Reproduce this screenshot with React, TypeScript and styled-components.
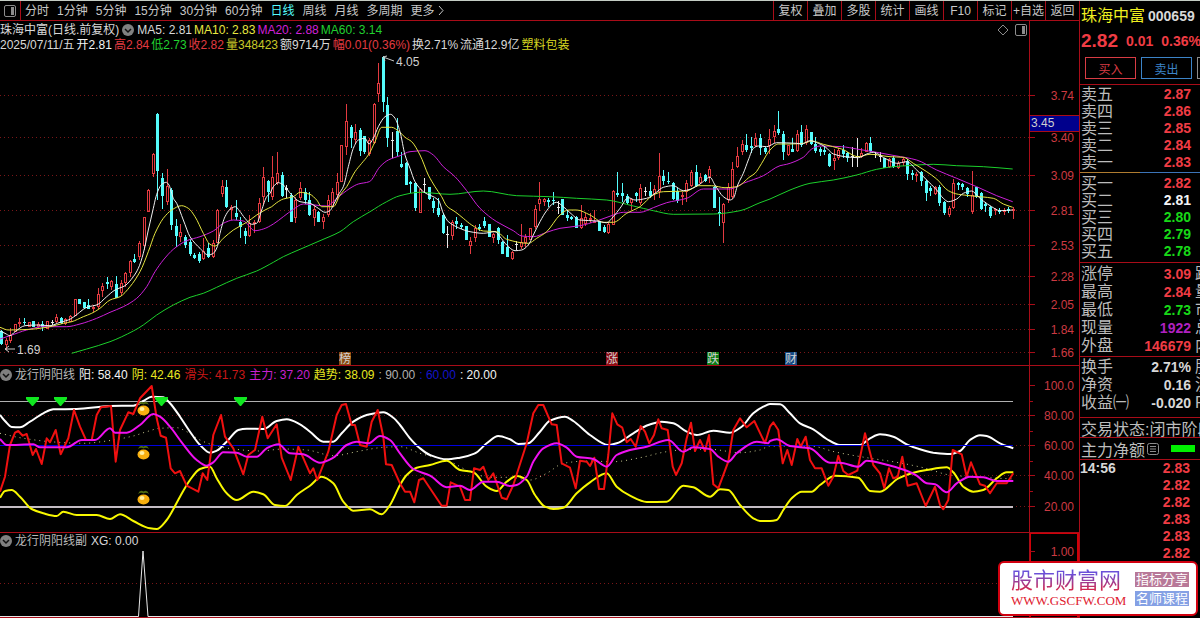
import React from "react";
import styled, { createGlobalStyle } from "styled-components";

const sans = `"Liberation Sans", "Noto Sans CJK SC", sans-serif`;
const RED = "#e23a40";
const LINE = "#a80c18";
const CYAN = "#54fcfc";

const GlobalStyle = createGlobalStyle`
  * { box-sizing: border-box; }
  body { margin: 0; background: #000; color: #c8c8c8; font-family: ${sans}; font-size: 12px; }
  button { font: inherit; color: inherit; background: none; border: 0; padding: 0; cursor: pointer; }
`;

/* ---------- layout ---------- */

const Screen = styled.div`
  display: flex;
  min-height: 100vh;
  border-top: 1px solid #c4ccc4;
  overflow: hidden;
`;

const Workspace = styled.main`
  flex: 1;
  min-width: 0;
  display: flex;
  flex-direction: column;
`;

const Toolbar = styled.header`
  display: flex;
  height: 20px;
  border-bottom: 1px solid ${LINE};
`;

const LayoutButton = styled.button`
  width: 21px;
  display: grid;
  place-items: center;
  border-right: 1px solid ${LINE};
`;

const Tabs = styled.nav`
  flex: 1;
  display: flex;
  align-items: center;
  gap: 8px;
  padding-left: 4px;
  white-space: nowrap;
`;

const Tab = styled.button<{ $active?: boolean }>`
  line-height: 18px;
  color: ${(p) => (p.$active ? CYAN : "#c8c8c8")};
`;

const Tools = styled.div`
  display: flex;
`;

const Tool = styled.button`
  width: 34px;
  line-height: 18px;
  border-left: 1px solid ${LINE};
  white-space: nowrap;
`;

const Panel = styled.section`
  display: flex;
  border-bottom: 1px solid ${LINE};
`;

const PanelBody = styled.div`
  flex: 1;
  min-width: 0;
`;

const InfoRow = styled.div<{ $height: number; $gap: number }>`
  display: flex;
  align-items: center;
  gap: ${(p) => p.$gap}px;
  height: ${(p) => p.$height}px;
  line-height: ${(p) => p.$height}px;
  white-space: nowrap;
`;

const MainInfo = styled.div`
  padding-top: 1px;
`;

const RowTools = styled.div`
  display: flex;
  gap: 6px;
  margin-left: auto;
  padding-right: 2px;
`;

const Value = styled.span<{ $color?: string }>`
  color: ${(p) => p.$color ?? "#d8d8d8"};
`;

const Plot = styled.svg<{ $height: number }>`
  display: block;
  width: 100%;
  height: ${(p) => p.$height}px;
`;

const Axis = styled.div`
  width: 50px;
  border-left: 1px solid ${LINE};
`;

const AxisText = styled.text`
  font-family: ${sans};
  font-size: 12px;
  text-anchor: end;
  fill: #cc3a42;
`;

const ChartText = styled.text`
  font-family: ${sans};
  font-size: 12px;
  fill: #d0d0d0;
`;

/* ---------- sidebar ---------- */

const Sidebar = styled.aside`
  width: 121px;
  border-left: 1px solid ${LINE};
  overflow: hidden;
  white-space: nowrap;
`;

const Quote = styled.div`
  height: 84px;
  padding: 6px 0 0 1px;
  border-bottom: 1px solid ${LINE};
`;

const QuoteLine = styled.div<{ $gap: number }>`
  display: flex;
  align-items: center;
  gap: ${(p) => p.$gap}px;
  height: 18px;
  line-height: 18px;
  margin-bottom: 7px;
`;

const StockName = styled.h1`
  margin: 0;
  font-size: 16px;
  font-weight: 400;
  color: #f0f020;
`;

const Strong = styled.strong<{ $size?: number; $color?: string }>`
  font-size: ${(p) => p.$size ?? 14}px;
  color: ${(p) => p.$color ?? "#d8d8d8"};
`;

const Trades = styled.div`
  display: flex;
  gap: 5px;
  padding-left: 4px;
`;

const TradeButton = styled.button<{ $color: string }>`
  flex: 0 0 51px;
  height: 22px;
  color: ${(p) => p.$color};
  border: 1px solid ${(p) => p.$color};
`;

const DataBlock = styled.div<{ $rule?: string; $top?: number; $bottom?: number }>`
  padding: ${(p) => p.$top ?? 1}px 0 ${(p) => p.$bottom ?? 1}px 1px;
  border-bottom: 1px solid ${LINE};
  border-image: ${(p) => p.$rule ?? "none"};
`;

const DataTable = styled.table<{ $row: number }>`
  width: 119px;
  table-layout: fixed;
  border-collapse: collapse;
  th, td { padding: 0; height: ${(p) => p.$row}px; line-height: ${(p) => p.$row}px; }
`;

const Label = styled.th`
  width: 50px;
  font-size: 16px;
  font-weight: 400;
  text-align: left;
  color: #bcbcbc;
`;

const Price = styled.td<{ $color: string }>`
  width: 60px;
  font-size: 14px;
  font-weight: 700;
  text-align: right;
  color: ${(p) => p.$color};
`;

const NextLabel = styled.td`
  padding-left: 4px !important;
  font-size: 16px;
  color: #bcbcbc;
`;

const Time = styled(Label)`
  font-size: 14px;
  font-weight: 700;
  color: #d8d8d8;
`;

const StatusRow = styled.div<{ $height: number }>`
  display: flex;
  align-items: center;
  height: ${(p) => p.$height}px;
  padding-left: 1px;
  font-size: 16px;
  color: #bcbcbc;
  border-bottom: 1px solid ${LINE};
`;

const FlowBar = styled.span`
  width: 24px;
  height: 7px;
  margin-left: 12px;
  background: #00f000;
`;

const ListIcon = styled.svg`
  margin-left: 2px;
`;

/* ---------- site badge ---------- */

const SiteBadge = styled.a`
  position: fixed;
  right: 2px;
  bottom: 2px;
  width: 200px;
  height: 55px;
  display: flex;
  justify-content: space-between;
  align-items: center;
  padding: 0 7px 0 11px;
  background: #fff;
  border: 2px solid #d2000f;
  border-radius: 6px;
  text-decoration: none;
  white-space: nowrap;
`;

const SiteName = styled.div`
  font-size: 22px;
  line-height: 24px;
  color: transparent;
  background: linear-gradient(#6a50d8 20%, #d02850 85%);
  background-clip: text;
`;

const SiteUrl = styled.div`
  font-family: "Liberation Serif", serif;
  font-size: 13px;
  line-height: 16px;
  color: #e02030;
`;

const SiteTags = styled.div`
  display: grid;
  gap: 4px;
`;

const SiteTag = styled.span<{ $bg: string }>`
  width: 54px;
  font-size: 13px;
  line-height: 15px;
  text-align: center;
  color: #fff;
  background: ${(p) => p.$bg};
`;

/* ---------- chart data ---------- */

/* One entry per day: kind, then wick top, body top, body bottom, wick bottom. */
const CANDLES = `
C 330 331 344 345;R 338 340 345 350;R 328 335 341 343;R 324 324 332 332;R 318 322 324 327;C 318 322 323 325;R 322 322 327 327;C 321 321 327 327;R 322 324 327 328;C 321 324 327 331;
R 321 321 329 329;W 320 322 323 325;R 314 317 322 323;C 317 318 323 324;R 318 319 324 325;R 315 316 322 322;R 299 299 316 316;C 299 299 304 304;C 302 302 308 308;C 299 305 309 309;
R 305 307 309 312;R 288 294 307 309;R 283 286 291 297;C 277 282 284 289;R 280 281 287 290;C 276 284 298 298;R 280 283 293 296;R 272 273 283 287;R 260 261 273 277;C 254 259 262 263;
R 241 243 257 260;R 217 217 246 250;R 189 190 212 212;R 153 154 174 177;C 113 114 171 200;C 173 178 196 209;R 169 186 202 205;C 188 190 225 230;C 219 226 236 247;R 224 232 237 242;
C 235 237 245 248;C 239 242 254 256;C 253 255 258 259;C 252 254 261 263;R 238 251 259 260;C 243 248 257 258;R 240 243 257 258;R 209 210 243 243;R 180 186 194 197;C 180 187 207 208;
R 205 207 210 220;C 200 213 217 220;C 217 222 227 238;C 228 231 236 244;R 215 223 236 237;R 220 222 224 233;R 198 203 222 223;R 167 177 197 205;C 180 181 192 202;R 156 177 197 200;
R 152 173 183 185;C 172 175 196 197;W 185 188 190 198;C 193 195 222 222;R 197 200 218 223;R 182 188 198 200;C 188 192 200 204;C 192 200 215 216;R 205 209 218 226;C 211 212 222 222;
R 214 217 222 229;R 195 200 215 217;R 188 192 207 207;R 173 182 195 200;R 145 145 182 182;R 104 121 147 155;C 125 127 138 148;R 124 132 140 144;C 128 130 151 156;C 136 136 152 154;
R 138 140 154 156;R 103 104 143 144;R 63 83 94 102;C 56 57 102 112;C 97 105 138 147;W 132 140 141 158;C 118 131 152 156;C 152 164 167 168;C 162 163 185 185;C 181 182 184 193;
C 183 183 208 211;R 188 189 213 213;W 178 184 185 193;C 187 187 199 200;C 198 201 208 213;C 198 208 215 217;C 213 215 233 234;W 226 234 235 248;R 220 222 236 240;C 217 221 224 229;
C 223 225 227 229;C 226 226 240 240;R 237 241 246 254;R 225 228 238 242;C 224 227 229 231;C 217 221 226 228;C 224 224 237 237;R 233 234 238 243;C 227 228 240 244;C 241 242 254 254;
C 235 247 257 257;R 251 252 259 260;W 241 244 245 250;R 224 242 247 249;R 234 237 243 247;R 228 228 240 240;R 205 209 227 229;R 182 199 204 211;R 198 199 202 206;C 198 200 202 207;
C 192 200 201 205;W 201 207 208 214;C 199 199 215 215;C 210 215 218 221;C 216 217 219 220;C 216 217 228 228;R 205 218 228 229;R 213 217 224 226;R 213 218 220 223;R 210 221 222 223;
C 221 221 231 231;C 225 227 232 233;R 222 224 233 234;R 190 191 225 225;C 172 193 195 197;C 183 193 196 202;C 194 196 203 205;R 198 199 203 210;C 192 193 196 202;R 184 188 203 205;
W 187 191 192 196;C 182 191 196 198;R 185 189 194 200;R 153 176 192 198;C 170 176 181 185;C 172 181 182 184;C 182 183 199 200;C 188 191 201 203;R 192 195 197 205;R 180 183 192 202;
R 170 172 186 187;C 165 172 186 187;R 173 177 183 184;C 174 175 181 182;R 166 169 177 183;C 186 187 208 208;C 197 212 214 226;R 203 204 223 243;R 183 187 200 203;R 162 169 197 199;
R 147 156 167 168;R 140 144 152 155;C 134 145 150 152;C 137 146 148 153;R 133 138 146 147;C 134 138 148 155;C 147 148 152 154;R 129 139 146 154;R 125 131 137 143;C 111 129 133 135;
C 131 134 152 160;R 145 145 155 156;C 138 149 152 152;R 130 134 151 152;C 125 132 145 147;R 125 129 143 145;C 132 132 144 145;C 137 144 151 153;C 147 149 152 156;C 146 150 152 155;
C 153 154 166 167;R 149 158 161 170;R 148 150 158 160;C 145 150 154 158;C 152 153 158 162;W 147 156 157 167;W 138 156 157 167;R 148 153 157 158;R 142 143 152 152;C 137 143 151 152;
W 152 154 155 158;W 152 156 157 162;C 158 158 168 168;R 158 159 167 168;C 156 158 167 168;R 161 163 168 169;R 157 159 163 166;C 159 161 174 180;C 170 173 175 180;R 172 174 176 182;
C 171 172 181 186;C 180 181 193 201;C 186 188 191 196;R 186 187 194 195;C 185 187 203 206;C 201 202 213 215;R 206 208 215 217;R 179 183 208 209;C 182 183 185 190;C 183 184 187 190;
C 187 188 194 197;R 171 195 212 214;C 187 187 197 198;C 192 193 209 210;C 202 204 206 212;C 206 207 216 218;R 208 209 211 215;C 208 210 212 214;R 208 210 212 215;C 207 209 211 213;
R 207 209 211 219`
  .split(";")
  .map((row, i) => {
    const [kind, ...levels] = row.trim().split(" ");
    const [high, top, bottom, low] = levels.map(Number);
    return { kind, high, top, bottom, low, x: Math.round(1 + i * 4.6) };
  });

/* A curve is a run of segments; points are thirds of a chart unit from the segment origin. */
type Segment = [originX: number, originY: number, points: string];

const toPoints = (segments: Segment[]) =>
  segments.flatMap(([ox, oy, points]) =>
    points.split(" ").map((pair) => {
      const [x, y] = pair.split(",").map(Number);
      return [ox + x / 3, oy + y / 3];
    })
  );

const straightPath = (segments: Segment[]) =>
  "M" + toPoints(segments).map(([x, y]) => `${x.toFixed(1)} ${y.toFixed(1)}`).join("L");

/* Cubic spline through the points, with slopes limited so that it does not overshoot. */
const smoothPath = (segments: Segment[]) => {
  const p = toPoints(segments);
  const slope = (i: number) => (p[i + 1][1] - p[i][1]) / (p[i + 1][0] - p[i][0]);
  const tangent = p.map((_, i) => {
    if (i === 0) return slope(0);
    if (i === p.length - 1) return slope(i - 1);
    const a = slope(i - 1);
    const b = slope(i);
    return a * b <= 0 ? 0 : (2 * a * b) / (a + b);
  });
  let d = `M${p[0][0].toFixed(1)} ${p[0][1].toFixed(1)}`;
  for (let i = 1; i < p.length; i++) {
    const [x0, y0] = p[i - 1];
    const [x1, y1] = p[i];
    const h = (x1 - x0) / 3;
    d += `C${[x0 + h, y0 + h * tangent[i - 1], x1 - h, y1 - h * tangent[i], x1, y1].map((n) => n.toFixed(1)).join(" ")}`;
  }
  return d;
};

const MA5: Segment[] = [
  [0, 190, "0,423 15,430 30,437 45,425 75,407 110,405 150,407 180,397 205,390 225,378 250,358 265,350 290,345 320,320 345,300 375,287 400,260 415,235 430,190 445,120 460,55 468,20"],
  [0, 0, "475,570 485,553 499,547 507,555 515,580"],
  [0, 190, "520,25 530,40 550,90 570,140 600,175 625,195 640,190 652,170 660,130 675,80 690,58 706,50 718,62 735,85 755,103 770,100 785,60 800,20"],
  [0, 0, "810,580 820,560 835,548 850,555 875,585 900,605 930,610"],
  [0, 190, "955,55 975,67 990,62 1000,45 1018,10"],
  [0, 0, "1030,560 1045,500 1060,445 1075,420 1095,415 1107,432 1120,415 1135,380 1155,350 1172,343 1185,355"],
  [400, 0, "0,395 15,465 30,505 45,545 70,575"],
  [400, 160, "115,120 130,160 145,185 175,203 210,215 250,220 285,215 300,230 320,255 345,272 365,270 385,255 400,225 420,185 440,152 460,130 470,127 490,140 510,158 540,180 590,183 620,188 640,170 660,145 685,113 705,120 740,115 765,100 790,82 820,77 850,92 870,88 900,72 930,52 945,75 970,110 990,120 1000,115 1013,75"],
  [400, 0, "1030,520 1045,480 1060,445 1075,438 1100,440 1130,428"],
  [770, 0, "80,430 95,432 120,422 145,430 165,440 190,462 225,470 265,473 290,462 310,457 345,475 380,490 410,485 440,510 470,540 500,570 520,595 535,605 560,597 580,580 605,573"],
  [770, 180, "625,50 640,63 665,80 690,92 728,90"],
];

const MA10: Segment[] = [
  [0, 190, "0,412 25,420 90,418 150,410 190,400 215,395 250,380 275,370 300,355 330,330 360,320 390,290 420,245 445,185 465,130 490,85 515,60 545,47 565,55 585,80 610,130 630,163 645,168 670,145 700,120 740,97 770,75 795,60 815,50 830,38"],
  [0, 0, "850,597 880,590 900,577 930,583 950,600"],
  [0, 190, "965,50 1000,50 1020,15"],
  [0, 0, "1040,560 1065,515 1085,490 1105,465 1125,425 1145,382 1175,382"],
  [400, 0, "0,397 15,412 35,425 60,465 85,525 105,560"],
  [400, 160, "125,110 140,138 165,155 190,175 215,195 250,213 290,215 320,238 385,250 410,235 440,215 480,165 505,150 530,150 570,165 610,187 640,187 680,160 720,140 760,105 790,95 860,93 895,77 935,77 975,83 1010,80 1050,50"],
  [400, 0, "1065,520 1085,490 1110,450 1135,432"],
  [770, 0, "60,432 100,430 125,423 160,433 215,447 265,470 300,463 360,470 400,472 430,490 470,515 500,537 535,572"],
  [770, 180, "565,43 600,47 670,55 700,72 728,82"],
];

const MA20: Segment[] = [
  [0, 190, "0,447 30,437 80,420 130,410 200,410 240,402 290,385 330,367 370,350 410,325 440,290 465,245 490,210 520,178 560,152 600,140 640,123 670,100 700,90 730,93 765,122 790,117 820,102 850,80 880,58 910,42 980,48 1010,25"],
  [0, 0, "1050,565 1075,552 1108,545 1140,500 1165,480"],
  [400, 0, "0,467 30,455 75,452 100,465 130,500 165,530"],
  [400, 160, "200,92 240,145 290,185 340,212 365,228 400,230 440,217 480,205 540,197 590,183 640,165 670,157 720,157 760,143 800,128 860,115 910,87 990,87"],
  [400, 0, "1030,550 1090,527 1140,497"],
  [770, 0, "50,493 100,472 125,447 150,438 215,440 260,447 320,457 375,467 440,480 500,510 560,535 620,560 680,587 728,605"],
];

const MA60: Segment[] = [
  [0, 190, "215,490 260,477 330,455 400,423 430,405 470,375 520,345 570,322 610,310 650,292 710,265 770,243 820,217 850,200 900,178 960,152 1020,125 1060,95 1110,65 1160,35"],
  [400, 0, "0,587 60,577 150,583 250,573 350,587 450,590 530,595"],
  [400, 160, "620,120 700,138 760,152 820,163 940,162 1020,152 1080,128"],
  [770, 0, "0,597 60,570 120,550 190,540 260,525 320,508 370,500 410,497 490,493 560,497 640,500 728,507"],
];

const YANG: Segment[] = [
  [0, 365, "0,150 15,168 35,186 60,187 90,170 130,145 160,133 230,132 330,123 400,122 430,108 455,95 490,97 510,115 540,155 570,200 600,240 630,263 650,257 680,230 715,195 740,191 790,192 830,168 860,163 900,178 930,200 970,230 1000,230 1025,205 1060,170 1100,150 1150,142 1180,158"],
  [400, 365, "0,180 30,220 60,250 90,270 140,283 180,278 225,265 260,235 295,213 330,223 355,237 385,235 420,200 450,167 495,155 520,168 570,210 625,240 650,235 700,205 745,180 785,170 820,175 860,200 890,210 940,197 990,203 1025,185 1060,145 1090,125"],
  [770, 365, "0,117 30,118 60,145 90,175 130,193 170,222 210,240 270,240 300,220 330,208 370,215 410,238 450,253 490,263 540,267 570,258 600,225 630,211 650,213 690,235 730,250"],
];

const YIN: Segment[] = [
  [0, 365, "0,398 15,378 35,375 60,395 95,432 130,445 170,453 190,440 230,450 290,450 330,462 360,448 400,468 450,490 470,492 500,465 540,395 570,345 600,312 630,305 650,340 680,385 710,405 760,380 790,388 825,420 855,423 890,390 930,362 965,335 1000,355 1030,410 1060,437 1110,433 1145,448 1170,420"],
  [400, 365, "0,360 20,330 50,308 90,300 140,287 180,315 220,322 260,365 290,378 320,350 350,333 380,345 405,390 435,425 460,432 490,428 530,385 570,352 620,325 650,365 690,392 740,411 800,410 850,362 880,367 930,395 960,373 985,375 1020,420 1060,460 1080,468"],
  [770, 365, "0,468 20,465 40,435 65,400 95,380 125,380 150,360 195,332 265,338 300,378 330,380 385,340 430,323 470,315 530,307 550,322 580,365 610,380 640,375 680,340 710,322 730,322"],
];

const FORCE: Segment[] = [
  [0, 365, "0,222 20,240 100,238 120,247 200,247 245,225 285,225 330,190 345,203 380,203 420,180 460,147 480,155 510,185 545,232 590,285 620,302 640,292 670,262 710,263 740,275 770,275 800,250 835,238 870,265 910,268 960,293 1000,278 1040,240 1070,230 1105,235 1140,213 1170,225"],
  [400, 365, "0,265 40,312 90,332 140,367 180,362 210,375 250,350 290,350 330,363 350,360 380,335 400,290 430,250 470,235 500,248 530,275 580,282 620,305 650,270 690,255 740,245 805,225 850,260 880,247 930,252 955,275 985,290 1010,265 1070,230 1105,235"],
  [770, 365, "0,228 20,223 60,243 120,250 180,293 210,293 265,305 290,287 345,298 410,317 440,332 470,355 495,358 530,382 560,355 600,335 640,337 680,348 730,348"],
];

const SLIP: Segment[] = [
  [0, 365, "0,380 15,335 30,240 45,203 55,198 68,212 80,207 98,270 108,252 125,297 140,220 150,232 167,195 182,268 205,220 222,135 240,185 258,225 275,225 290,150 303,127 333,123 347,290 360,195 385,142 400,147 420,100 455,63 470,160 482,212 498,218 512,310 525,325 540,318 560,362 595,380 608,325 622,345 640,210 663,150 675,215 700,250 730,328 745,270 765,255 787,155 803,220 830,178 845,278 872,345 895,245 930,325 940,310 952,345 985,260 1010,150 1025,120 1038,117 1055,180 1065,180 1080,240 1100,245 1115,170 1133,135 1150,215 1158,298 1175,300"],
  [400, 365, "0,355 15,380 30,380 43,412 57,345 70,340 90,370 125,422 140,422 152,352 180,365 195,405 210,405 222,310 240,315 250,305 265,345 280,325 305,398 320,403 340,360 380,235 400,145 415,120 430,120 455,178 470,180 485,295 510,308 527,370 540,287 560,290 570,303 583,278 597,372 612,372 625,270 637,145 652,178 667,188 680,232 692,222 707,245 722,183 735,200 748,235 762,210 775,163 785,190 803,195 818,305 828,330 845,295 860,220 873,173 885,258 900,225 915,258 927,210 940,358 955,370 985,290 1000,195 1020,160 1040,187 1063,168 1095,235"],
  [770, 365, "0,185 10,172 25,195 38,295 52,255 65,300 82,222 92,245 107,215 120,285 135,310 155,310 175,362 190,335 205,272 220,318 235,330 262,317 285,205 310,300 330,325 343,370 357,310 370,340 383,335 397,275 413,362 440,355 467,423 495,365 510,420 520,433 535,405 548,255 575,268 590,335 603,292 630,358 645,362 660,385 680,355 710,355 730,325"],
];

const TREND: Segment[] = [
  [0, 365, "0,205 60,218 150,230 250,235 320,228 400,213 440,200 480,190 530,188 560,200 600,225 640,240 700,252 780,258 850,252 920,255 1000,272 1080,258 1150,247"],
  [400, 365, "0,245 60,265 150,290 210,320 270,337 330,337 390,345 440,325 490,295 560,288 640,290 720,278 800,260 870,253 930,253 1020,263 1080,255"],
  [770, 365, "0,243 120,243 200,262 290,278 380,292 460,308 540,330 600,335 730,342"],
];

const PRICE_TICKS: [number, string][] = [
  [95, "3.74"], [137, "3.40"], [175, "3.09"], [210, "2.81"], [245, "2.53"],
  [276, "2.28"], [304, "2.05"], [329, "1.84"], [352, "1.66"],
];

const LEVEL_TICKS: [number, string][] = [
  [385, "100.0"], [415, "80.00"], [445, "60.00"], [475, "40.00"], [506, "20.00"],
];

const EVENTS = [
  { x: 345, text: "榜", fill: "#8a4a10" },
  { x: 612, text: "涨", fill: "#8c0c14" },
  { x: 713, text: "跌", fill: "#0c7c14" },
  { x: 791, text: "财", fill: "#144a84" },
];

/* ---------- pieces ---------- */

type CurveProps = { data: Segment[]; color: string; width?: number; dash?: string; straight?: boolean };

const Curve = ({ data, color, width = 1, dash, straight }: CurveProps) => (
  <path
    d={straight ? straightPath(data) : smoothPath(data)}
    fill="none"
    stroke={color}
    strokeWidth={width}
    strokeDasharray={dash}
    strokeLinejoin="round"
  />
);

const GridLine = ({ y }: { y: number }) => (
  <path d={`M0 ${y}.5H1029`} stroke="#7a1618" strokeDasharray="1 3" shapeRendering="crispEdges" />
);

const Candle = ({ kind, x, high, top, bottom, low }: (typeof CANDLES)[number]) => {
  if (kind === "R") {
    return (
      <g stroke={RED} fill="none">
        <path d={`M${x}.5 ${high}V${top}M${x}.5 ${bottom}V${low}`} />
        <rect x={x - 0.5} y={top + 0.5} width={2} height={Math.max(1, bottom - top - 1)} />
      </g>
    );
  }
  const color = kind === "C" ? CYAN : "#e8e8e8";
  return (
    <g fill={color}>
      <rect x={x} y={high} width={1} height={low - high} />
      <rect x={x - 1} y={top} width={3} height={bottom - top} />
    </g>
  );
};

const FoldIcon = () => (
  <svg width="12" height="12" viewBox="0 0 12 12" aria-hidden="true">
    <circle cx="6" cy="6" r="6" fill="#808080" />
    <path d="M3 5l3 3 3-3" fill="none" stroke="#101010" strokeWidth="1.5" />
  </svg>
);

const SplitIcon = () => (
  <svg width="12" height="12" viewBox="0 0 12 12" aria-hidden="true">
    <rect x=".5" y=".5" width="11" height="11" rx="1.5" fill="none" stroke="#8c8c8c" />
    <rect x="7" y="2" width="3" height="8" fill="#8c8c8c" />
  </svg>
);

const Fruit = ({ y }: { y: number }) => (
  <g>
    <path d={`M138 ${y - 5}q2-5 5.5-2.5q3.5-2.5 5.5 2.5q-3-2-5.5-.5q-2.5-1.500-5.500 .5z`} fill="#4c6a10" />
    <ellipse cx="143.500" cy={y + 0.5} rx="6" ry="5" fill="#f8b010" />
    <ellipse cx="142" cy={y - 1} rx="2.500" ry="2" fill="#fff0a0" />
  </g>
);

const TABS = ["分时", "1分钟", "5分钟", "15分钟", "30分钟", "60分钟", "日线", "周线", "月线", "多周期"];
const TOOLS = ["复权", "叠加", "多股", "统计", "画线", "F10", "标记", "+自选", "返回"];

const UP = "#f03c44";
const DOWN = "#18d818";

type Row = [label: string, value: string, color: string, next?: string];

const ASKS: Row[] = [
  ["卖五", "2.87", UP], ["卖四", "2.86", UP], ["卖三", "2.85", UP], ["卖二", "2.84", UP], ["卖一", "2.83", UP],
];
const BIDS: Row[] = [
  ["买一", "2.82", UP], ["买二", "2.81", "#f4f4f4"], ["买三", "2.80", DOWN], ["买四", "2.79", DOWN], ["买五", "2.78", DOWN],
];
const STATS: Row[] = [
  ["涨停", "3.09", UP, "跌"], ["最高", "2.84", UP, "量"], ["最低", "2.73", DOWN, "市"],
  ["现量", "1922", "#b020c0", "总"], ["外盘", "146679", UP, "内"],
];
const BASICS: Row[] = [
  ["换手", "2.71%", "#d8d8d8", "股"], ["净资", "0.16", "#d8d8d8", "流"], ["收益㈠", "-0.020", "#d8d8d8", "P"],
];
const DEALS = ["2.83", "2.82", "2.82", "2.83", "2.83", "2.82"];

const Rows = ({ rows, height }: { rows: Row[]; height: number }) => (
  <DataTable $row={height}>
    <tbody>
      {rows.map(([label, value, color, next]) => (
        <tr key={label}>
          <Label scope="row">{label}</Label>
          <Price $color={color}>{value}</Price>
          <NextLabel>{next}</NextLabel>
        </tr>
      ))}
    </tbody>
  </DataTable>
);

const PricePanel = () => (
  <Panel>
    <PanelBody>
      <MainInfo>
        <InfoRow $height={16} $gap={2}>
          <InfoRow as="span" $height={16} $gap={3}>
            <Value>珠海中富(日线.前复权)</Value>
            <FoldIcon />
            <Value>MA5: 2.81</Value>
          </InfoRow>
          <Value $color="#e8e840">MA10: 2.83</Value>
          <Value $color="#d020d8">MA20: 2.88</Value>
          <Value $color="#20d030">MA60: 3.14</Value>
          <RowTools>
            <svg width="12" height="12" viewBox="0 0 12 12" aria-hidden="true">
              <path d="M6 1l5 5-5 5-5-5z" fill="none" stroke="#8c8c8c" />
            </svg>
            <SplitIcon />
          </RowTools>
        </InfoRow>
        <InfoRow $height={14} $gap={2}>
          <Value>2025/07/11/五</Value>
          <Value $color="#f4f4f4">开2.81</Value>
          <Value $color={RED}>高2.84</Value>
          <Value $color="#20d030">低2.73</Value>
          <Value $color={RED}>收2.82</Value>
          <Value $color="#c8c828">量348423</Value>
          <Value>额9714万</Value>
          <Value $color={RED}>幅0.01(0.36%)</Value>
          <Value>换2.71%</Value>
          <Value>流通12.9亿</Value>
          <Value $color="#d8d820">塑料包装</Value>
        </InfoRow>
      </MainInfo>
      <Plot $height={313} viewBox="0 52 1029 313" preserveAspectRatio="none">
        {PRICE_TICKS.map(([y]) => <GridLine key={y} y={y} />)}
        <g shapeRendering="crispEdges">
          {CANDLES.map((c) => <Candle key={c.x} {...c} />)}
        </g>
        <Curve data={MA60} color="#1cd02c" />
        <Curve data={MA20} color="#cc20d8" />
        <Curve data={MA10} color="#e4e440" />
        <Curve data={MA5} color="#f0f0f0" />
        <path d="M383 57l11 4M383 57l4-1M383 57l2 4M5 349h10M5 349l4-3M5 349l4 3" stroke="#c8c8c8" fill="none" />
        <ChartText x="396" y="66">4.05</ChartText>
        <ChartText x="17" y="354">1.69</ChartText>
        {EVENTS.map((e) => (
          <g key={e.text}>
            <rect x={e.x - 6} y="352" width="12" height="13" fill={e.fill} />
            <ChartText x={e.x - 6} y="363">{e.text}</ChartText>
          </g>
        ))}
      </Plot>
    </PanelBody>
    <Axis>
      <Plot $height={344} viewBox="1030 21 49 344">
        {PRICE_TICKS.map(([y, text]) => (
          <g key={y}>
            <path d={`M1030 ${y}.5h5`} stroke={LINE} />
            <AxisText x="1074" y={y + 5}>{text}</AxisText>
          </g>
        ))}
        <rect x="1030" y="115" width="49" height="16" fill="#00008c" />
        <path d="M1030 115.500h49M1030 131.500h49" stroke={LINE} />
        <ChartText x="1031" y="127">3.45</ChartText>
      </Plot>
    </Axis>
  </Panel>
);

const TrendPanel = () => (
  <Panel>
    <PanelBody>
      <InfoRow $height={18} $gap={4}>
        <InfoRow as="span" $height={18} $gap={3}>
          <FoldIcon />
          <Value $color="#b8b8b8">龙行阴阳线</Value>
        </InfoRow>
        <Value $color="#f4f4f4">阳: 58.40</Value>
        <Value $color="#e8e820">阴: 42.46</Value>
        <Value $color="#c81818">滑头: 41.73</Value>
        <Value $color="#c820d0">主力: 37.20</Value>
        <Value $color="#e8e820">趋势: 38.09</Value>
        <Value $color="#b0b0b0">: 90.00</Value>
        <Value $color="#1414c8">: 60.00</Value>
        <Value $color="#f4f4f4">: 20.00</Value>
      </InfoRow>
      <Plot $height={148} viewBox="0 384 1029 148" preserveAspectRatio="none">
        {LEVEL_TICKS.slice(1).map(([y]) => <GridLine key={y} y={y} />)}
        <path d="M0 401.500H1013" stroke="#b0b0b0" />
        <path d="M0 507H1013" stroke="#c4bcc4" strokeWidth="2" />
        <Curve data={TREND} color="#c8c890" dash="1 4" />
        <Curve data={YANG} color="#ffffff" width={2} />
        <Curve data={YIN} color="#f8f800" width={2} />
        <path d="M0 445.500H1013" stroke="#0000e0" />
        <Curve data={SLIP} color="#f01010" width={2} straight />
        <Curve data={FORCE} color="#f010f0" width={2} />
        {[410, 454, 499].map((y) => <Fruit key={y} y={y} />)}
        {[32, 60, 161, 240].map((x) => (
          <path key={x} d={`M${x - 6} 397h13v2l-6 7h-1l-6-7z`} fill="#10e820" />
        ))}
      </Plot>
    </PanelBody>
    <Axis>
      <Plot $height={166} viewBox="1030 366 49 166">
        <path d="M1030 401.500h3M1030 431.500h3M1030 461.500h3M1030 491.500h3" stroke={LINE} />
        {LEVEL_TICKS.map(([y, text]) => (
          <g key={y}>
            <path d={`M1030 ${y}.5h5`} stroke={LINE} />
            <AxisText x="1074" y={y + 5}>{text}</AxisText>
          </g>
        ))}
      </Plot>
    </Axis>
  </Panel>
);

const SignalPanel = () => (
  <Panel>
    <PanelBody>
      <InfoRow $height={16} $gap={4}>
        <InfoRow as="span" $height={16} $gap={3}>
          <FoldIcon />
          <Value $color="#b8b8b8">龙行阴阳线副</Value>
        </InfoRow>
        <Value>XG: 0.00</Value>
      </InfoRow>
      <Plot $height={68} viewBox="0 549 1029 68" preserveAspectRatio="none">
        <GridLine y={583} />
        <path d="M0 616.500H138.500L143 551L148 616.500H1013" fill="none" stroke="#e8e8e8" />
      </Plot>
    </PanelBody>
    <Axis>
      <Plot $height={84} viewBox="1030 533 49 84">
        <rect x="1030" y="533" width="48" height="90" fill="none" stroke="#d00008" strokeWidth="2" />
        <path d="M1030 551.500h5" stroke={LINE} />
        <AxisText x="1074" y="556">1.00</AxisText>
      </Plot>
    </Axis>
  </Panel>
);

export default function App() {
  return (
    <>
      <GlobalStyle />
      <Screen>
        <Workspace>
          <Toolbar>
            <LayoutButton aria-label="布局"><SplitIcon /></LayoutButton>
            <Tabs>
              {TABS.map((t) => <Tab key={t} $active={t === "日线"}>{t}</Tab>)}
              <Tab>
                更多{" "}
                <svg width="6" height="9" viewBox="0 0 6 9" aria-hidden="true">
                  <path d="M1 0l4 4.500-4 4.500" fill="none" stroke="#c8c8c8" />
                </svg>
              </Tab>
            </Tabs>
            <Tools>
              {TOOLS.map((t) => <Tool key={t}>{t}</Tool>)}
            </Tools>
          </Toolbar>
          <PricePanel />
          <TrendPanel />
          <SignalPanel />
        </Workspace>

        <Sidebar>
          <Quote>
            <QuoteLine $gap={3}>
              <StockName>珠海中富</StockName>
              <Strong>000659</Strong>
            </QuoteLine>
            <QuoteLine $gap={8}>
              <Strong $size={19} $color={UP}>2.82</Strong>
              <Strong $color={UP}>0.01</Strong>
              <Strong $color={UP}>0.36%</Strong>
            </QuoteLine>
            <Trades>
              <TradeButton $color="#d83c44">买入</TradeButton>
              <TradeButton $color="#3c84c8">卖出</TradeButton>
              <TradeButton $color="#8c8c8c" aria-label="撤单" />
            </Trades>
          </Quote>
          <DataBlock $rule="linear-gradient(90deg, #b07c30 50%, #3c74b8 50%) 1">
            <Rows rows={ASKS} height={17} />
          </DataBlock>
          <DataBlock $top={2} $bottom={2}>
            <Rows rows={BIDS} height={17} />
          </DataBlock>
          <DataBlock $top={2}>
            <Rows rows={STATS} height={18} />
          </DataBlock>
          <DataBlock $bottom={5}>
            <Rows rows={BASICS} height={18} />
          </DataBlock>
          <StatusRow $height={20}>交易状态:闭市阶段</StatusRow>
          <StatusRow $height={22}>
            主力净额
            <ListIcon width="12" height="12" viewBox="0 0 12 12" aria-hidden="true">
              <rect x=".5" y=".5" width="11" height="11" rx="2" fill="none" stroke="#8c8c8c" />
              <path d="M3 3.500h6M3 6h6M3 8.500h6" stroke="#8c8c8c" />
            </ListIcon>
            <FlowBar />
          </StatusRow>
          <DataTable $row={17}>
            <tbody>
              {DEALS.map((price, i) => (
                <tr key={i}>
                  <Time scope="row">{i === 0 ? "14:56" : ""}</Time>
                  <Price $color={UP}>{price}</Price>
                  <NextLabel />
                </tr>
              ))}
            </tbody>
          </DataTable>
        </Sidebar>
      </Screen>

      <SiteBadge href="#">
        <div>
          <SiteName>股市财富网</SiteName>
          <SiteUrl>WWW.GSCFW.COM</SiteUrl>
        </div>
        <SiteTags>
          <SiteTag $bg="#b87898">指标分享</SiteTag>
          <SiteTag $bg="#84a0e4">名师课程</SiteTag>
        </SiteTags>
      </SiteBadge>
    </>
  );
}
